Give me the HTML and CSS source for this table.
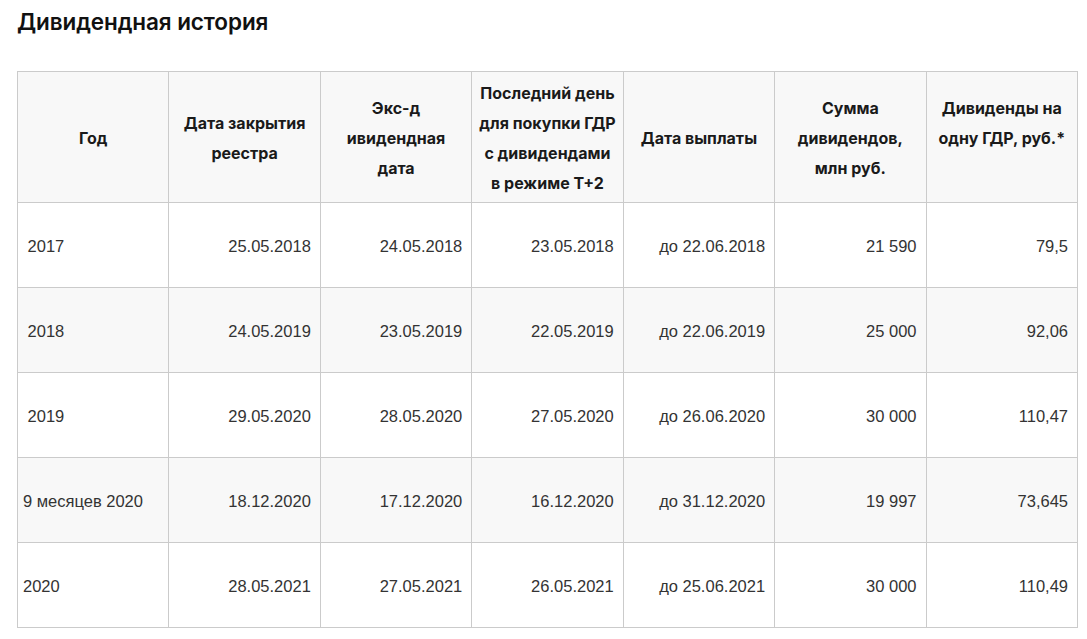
FILE: index.html
```html
<!DOCTYPE html>
<html lang="ru">
<head>
<meta charset="utf-8">
<title>Дивидендная история</title>
<link rel="stylesheet" href="styles.css">
</head>
<body>
<h2 class="title">Дивидендная история</h2>
<table class="divs">
  <thead>
    <tr>
      <th>Год</th>
      <th>Дата закрытия реестра</th>
      <th>Экс-д ивидендная<br>дата</th>
      <th>Последний&nbsp;день для&nbsp;покупки&nbsp;ГДР с&nbsp;дивидендами в&nbsp;режиме Т+2</th>
      <th>Дата выплаты</th>
      <th>Сумма дивидендов, млн&nbsp;руб.</th>
      <th>Дивиденды на одну ГДР, руб.*<br>&nbsp;</th>
    </tr>
  </thead>
  <tbody>
    <tr>
      <td class="l">&nbsp;2017</td><td>25.05.2018</td><td>24.05.2018</td><td>23.05.2018</td><td>до 22.06.2018</td><td>21 590</td><td>79,5</td>
    </tr>
    <tr>
      <td class="l">&nbsp;2018</td><td>24.05.2019</td><td>23.05.2019</td><td>22.05.2019</td><td>до 22.06.2019</td><td>25 000</td><td>92,06</td>
    </tr>
    <tr>
      <td class="l">&nbsp;2019</td><td>29.05.2020</td><td>28.05.2020</td><td>27.05.2020</td><td>до 26.06.2020</td><td>30 000</td><td>110,47</td>
    </tr>
    <tr>
      <td class="l">9 месяцев 2020</td><td>18.12.2020</td><td>17.12.2020</td><td>16.12.2020</td><td>до 31.12.2020</td><td>19 997</td><td>73,645</td>
    </tr>
    <tr>
      <td class="l">2020</td><td>28.05.2021</td><td>27.05.2021</td><td>26.05.2021</td><td>до 25.06.2021</td><td>30 000</td><td>110,49</td>
    </tr>
  </tbody>
</table>
</body>
</html>
```
FILE: styles.css
```css
html, body {
  margin: 0;
  padding: 0;
  background: #fff;
}
body {
  padding: 0 10px 0 17px;
  font-family: "Liberation Sans", Arial, sans-serif;
  color: #333;
}
.title {
  margin: 0;
  padding-top: 8px;
  font-family: Inter, "Liberation Sans", sans-serif;
  font-weight: 600;
  font-size: 22.5px;
  line-height: 28px;
  letter-spacing: -0.1px;
  color: #111;
}
.divs {
  margin-top: 35px;
  width: 1061px;
  border-collapse: collapse;
  table-layout: fixed;
}
.divs th,
.divs td {
  border: 1px solid #cbcbcb;
}
.divs th {
  background: #f8f8f8;
  height: 129px;
  padding: 1px 4px 0;
  font-family: Inter, "Liberation Sans", sans-serif;
  font-weight: 700;
  font-size: 16px;
  line-height: 30px;
  color: #1a1a1a;
  text-align: center;
  vertical-align: middle;
}
.divs td {
  height: 81px;
  padding: 3px 9px 0 5px;
  font-size: 16.5px;
  text-align: right;
  vertical-align: middle;
  color: #333;
}
.divs td.l {
  text-align: left;
}
.divs tbody tr:nth-child(even) td {
  background: #f8f8f8;
}
```
